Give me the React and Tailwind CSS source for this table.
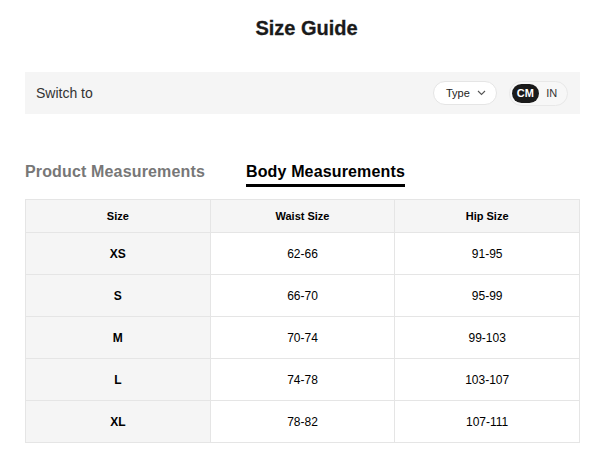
import React, { useState } from "react";

const rows = [
  { size: "XS", waist: "62-66", hip: "91-95" },
  { size: "S", waist: "66-70", hip: "95-99" },
  { size: "M", waist: "70-74", hip: "99-103" },
  { size: "L", waist: "74-78", hip: "103-107" },
  { size: "XL", waist: "78-82", hip: "107-111" },
];

const App = () => {
  const [unit, setUnit] = useState("CM");
  const [tab, setTab] = useState("body");

  return (
    <div className="bg-white min-h-[452px] text-black" style={{ fontFamily: '"Liberation Sans", Arial, sans-serif' }}>
      <div className="ml-[25px] w-[555px] pt-[17px]">
        <h1 className="pl-[8px] text-center text-[20px] leading-[23px] font-bold text-[#1a1a1a] [-webkit-text-stroke:0.3px_#1a1a1a]">Size Guide</h1>

        <div className="mt-[32px] h-[42px] bg-[#f5f5f5] flex items-center pl-[11px] pr-[12px]">
          <span className="text-[14px] text-[#333]">Switch to</span>
          <div className="ml-auto flex items-center gap-[12px]">
            <button className="h-[24px] w-[64px] rounded-full bg-white border border-[#e5e5e5] flex items-center pl-[12px] gap-[7px] text-[11px] text-[#222]">
              Type
              <svg width="9" height="6" viewBox="0 0 9 6" fill="none" stroke="#555" strokeWidth="1.1">
                <path d="M1 1l3.5 3.5L8 1" />
              </svg>
            </button>
            <div className="h-[25px] w-[59px] rounded-full bg-[#f7f7f7] border border-[#e8e8e8] flex items-center px-[2px] text-[11px] font-bold">
              {["CM", "IN"].map((u) => (
                <button
                  key={u}
                  onClick={() => setUnit(u)}
                  className={
                    unit === u
                      ? "h-[19px] w-[27px] rounded-full bg-[#1a1a1a] text-white"
                      : "h-[19px] w-[27px] rounded-full text-[#333] font-normal"
                  }
                >
                  {u}
                </button>
              ))}
            </div>
          </div>
        </div>

        <div className="mt-[49px] flex gap-[41px] items-start">
          <button
            onClick={() => setTab("product")}
            className={
              tab === "product"
                ? "text-[16px] tracking-[0.15px] leading-[18px] font-bold text-black pb-[3px] border-b-[3px] border-black"
                : "text-[16px] tracking-[0.15px] leading-[18px] font-bold text-[#777] pb-[3px] border-b-[3px] border-transparent"
            }
          >
            Product Measurements
          </button>
          <button
            onClick={() => setTab("body")}
            className={
              tab === "body"
                ? "text-[16px] tracking-[0.15px] leading-[18px] font-bold text-black pb-[3px] border-b-[3px] border-black"
                : "text-[16px] tracking-[0.15px] leading-[18px] font-bold text-[#777] pb-[3px] border-b-[3px] border-transparent"
            }
          >
            Body Measurements
          </button>
        </div>

        <table className="mt-[12px] w-full table-fixed border-collapse border border-[#e5e5e5] text-center">
          <thead>
            <tr className="bg-[#f5f5f5] h-[33px]">
              <th className="border border-[#e5e5e5] text-[11px] font-bold">Size</th>
              <th className="border border-[#e5e5e5] text-[11px] font-bold">Waist Size</th>
              <th className="border border-[#e5e5e5] text-[11px] font-bold">Hip Size</th>
            </tr>
          </thead>
          <tbody>
            {rows.map((r) => (
              <tr key={r.size} className="h-[42px]">
                <td className="border border-[#e5e5e5] bg-[#f5f5f5] text-[12px] font-bold">{r.size}</td>
                <td className="border border-[#e5e5e5] text-[12px]">{r.waist}</td>
                <td className="border border-[#e5e5e5] text-[12px]">{r.hip}</td>
              </tr>
            ))}
          </tbody>
        </table>
      </div>
    </div>
  );
};

export default App;
